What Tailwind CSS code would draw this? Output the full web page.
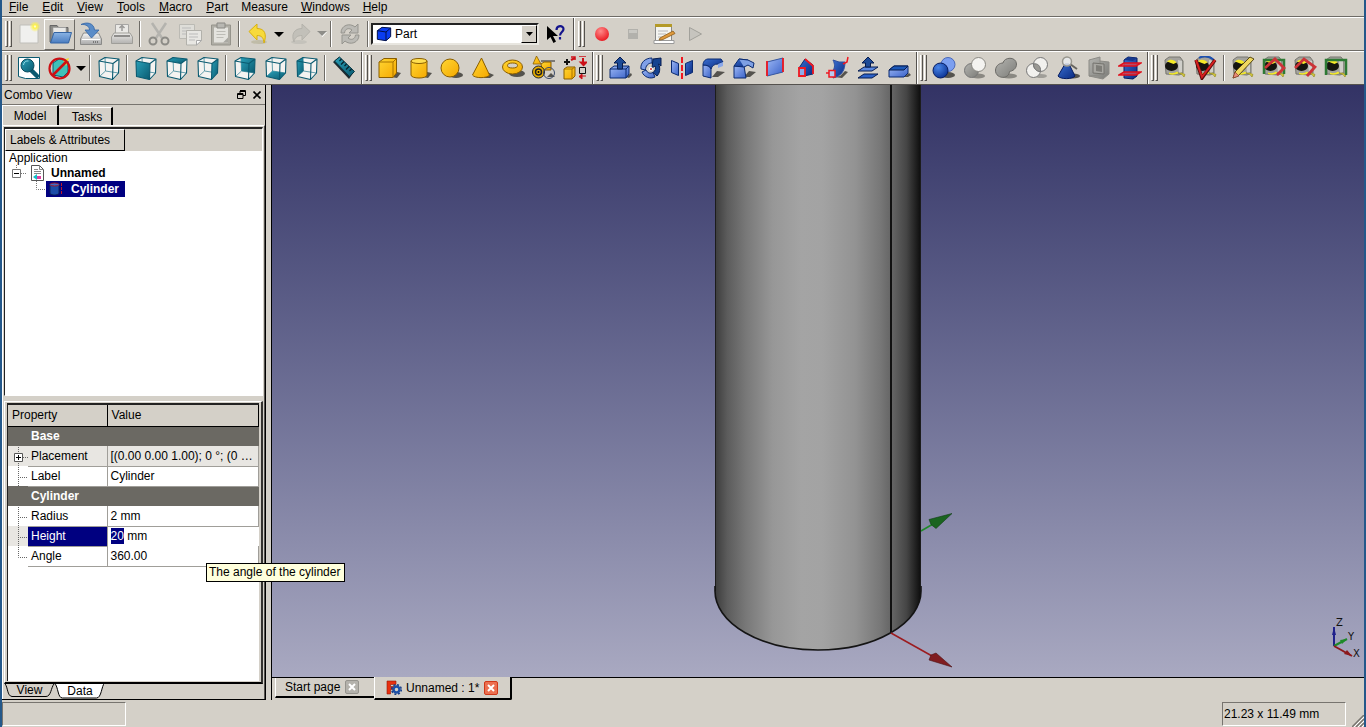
<!DOCTYPE html>
<html lang="en">
<head>
  <meta charset="UTF-8">
  <title>FreeCAD</title>
  <script src="https://cdn.jsdelivr.net/npm/@tailwindcss/browser@4"></script>
</head>
<body class="h-screen flex flex-col overflow-hidden bg-[#d4d0c8] border-x-2 border-[#24588a] font-['Liberation_Sans',Arial,sans-serif] text-xs leading-4 text-black">

  <!-- Icon definitions -->
  <svg class="absolute size-0" aria-hidden="true">
    <defs>
      <linearGradient id="yel" x1="0" y1="0" x2="1" y2="1"><stop offset="0" stop-color="#ffd633"/><stop offset="1" stop-color="#f5a800"/></linearGradient>
      <linearGradient id="blu" x1="0" y1="0" x2="1" y2="1"><stop offset="0" stop-color="#9db8f5"/><stop offset="1" stop-color="#3a62c8"/></linearGradient>
      <linearGradient id="dbl" x1="0" y1="0" x2="1" y2="1"><stop offset="0" stop-color="#3a6fd0"/><stop offset="1" stop-color="#0a2a80"/></linearGradient>
      <linearGradient id="tea" x1="0" y1="0" x2="1" y2="1"><stop offset="0" stop-color="#2aa0b8"/><stop offset="1" stop-color="#0a5a70"/></linearGradient>
      <linearGradient id="gry" x1="0" y1="0" x2="1" y2="1"><stop offset="0" stop-color="#b4b4b0"/><stop offset="1" stop-color="#7c7c78"/></linearGradient>
      <linearGradient id="met" x1="0" y1="0" x2="0" y2="1"><stop offset="0" stop-color="#f4f4f4"/><stop offset="1" stop-color="#a8a8a8"/></linearGradient>
      <linearGradient id="fold" x1="0" y1="0" x2="0" y2="1"><stop offset="0" stop-color="#8ab4e4"/><stop offset="1" stop-color="#4a7cc0"/></linearGradient>
      <radialGradient id="sun"><stop offset="0" stop-color="#fff"/><stop offset=".3" stop-color="#fff34a"/><stop offset="1" stop-color="#fff34a" stop-opacity="0"/></radialGradient>
      <radialGradient id="ball" cx=".35" cy=".3" r=".75"><stop offset="0" stop-color="#4a86e8"/><stop offset="1" stop-color="#0a3294"/></radialGradient>
      <radialGradient id="red" cx=".4" cy=".3" r=".7"><stop offset="0" stop-color="#ff8a8a"/><stop offset="1" stop-color="#ea1c24"/></radialGradient>
    </defs>

    <!-- File -->
    <symbol id="i-new" viewBox="0 0 24 24"><path d="M3 3h18v18H3z" fill="#f0f0ee" stroke="#c0bfba"/><circle cx="18" cy="4.500" r="5.500" fill="url(#sun)"/></symbol>
    <symbol id="i-open" viewBox="0 0 24 24"><path d="M2 3.500h7l1.500 2H20V20H2z" fill="#8a8a86" stroke="#666"/><path d="M5 5.500h13v8H5z" fill="#e8e8e6" stroke="#999" stroke-width=".6"/><path d="M6 10.500h17.500L20.500 21H2.500z" fill="url(#fold)" stroke="#3465a4"/></symbol>
    <symbol id="i-save" viewBox="0 0 24 24"><path d="M4.500 11h15l3 6v5.500h-21V17z" fill="url(#met)" stroke="#8a8a88"/><path d="M3 17.500h18" stroke="#fff"/><path d="M14 20h6" stroke="#777" stroke-dasharray="1 1" stroke-width="2"/><path d="M2 2.500C8-.5 15 1 15.500 8H20l-7.500 8L6 8h4.500C10.500 4.500 7 2 2 2.500z" fill="#5a8cc8" stroke="#3465a4" stroke-width=".8"/></symbol>
    <symbol id="i-print" viewBox="0 0 24 24" opacity=".75"><path d="M5.500 2.500h13V12h-13z" fill="#f2f2f0" stroke="#999"/><path d="M12 4v5M9.500 6L12 3.500 14.500 6" fill="none" stroke="#888" stroke-width="1.500"/><path d="M4 11h16l2.500 4v6.500h-21V15z" fill="url(#met)" stroke="#8e8e8a"/><path d="M4 14h16" stroke="#777" stroke-width="2"/></symbol>
    <symbol id="i-cut" viewBox="0 0 24 24"><path d="M5 1l10 15M19 1L9 16" stroke="#b4b3ae" stroke-width="2.500"/><g fill="none" stroke="#8c8b86" stroke-width="2"><circle cx="6" cy="19" r="3.500"/><circle cx="18" cy="19" r="3.500"/></g></symbol>
    <symbol id="i-copy" viewBox="0 0 24 24"><path d="M1.500 2.500h15v14h-15z" fill="#deddd8" stroke="#bbbab4"/><path d="M4 6h9M4 9h5M4 12h5" stroke="#bbb"/><path d="M8.500 8.500h15v10l-5 4.500h-10z" fill="#e8e7e3" stroke="#b2b1ab"/><path d="M11 12h9M11 15h9M11 18h6" stroke="#bbb"/><path d="M23.500 18.500h-5V23z" fill="#fff" stroke="#aaa"/></symbol>
    <symbol id="i-paste" viewBox="0 0 24 24"><path d="M2.500 3h19v20h-19z" fill="#b0aea6" stroke="#96948c"/><path d="M5 5.500h14v15H5z" fill="#e4e3de"/><path d="M8 1h8v5H8z" fill="#b8b7b2" stroke="#8a8984"/><path d="M7.500 9.500h9M7.500 12.500h9M7.500 15.500h7" stroke="#bdbcb6"/><path d="M19 15.500v5h-5z" fill="#a9a8a2"/></symbol>
    <symbol id="i-undo" viewBox="0 0 24 24"><ellipse cx="13" cy="20" rx="8" ry="2" fill="#c0bca8"/><path d="M3 9.500L11 2v4.500c8 0 10 6 7 14.500-.5-5-2-7.500-7-7.500V18z" fill="#f7da3c" stroke="#d8b010"/></symbol>
    <symbol id="i-redo" viewBox="0 0 24 24"><ellipse cx="10" cy="20" rx="8" ry="2" fill="#c4c2bb"/><path d="M21 9.500L13 2v4.500c-8 0-11 6-8 13.500.5-4 3-6.500 8-6.500V18z" fill="#c2c0b9" stroke="#b4b2ab"/></symbol>
    <symbol id="i-refresh" viewBox="0 0 24 24"><g fill="#bbbab5" stroke="#96958f"><path d="M3 11c0-8 9-10.500 14-6l3-3v9h-9l3-3c-3-2.500-7-1.500-7.500 3z"/><path d="M21 13c0 8-9 10.500-14 6l-3 3v-9h9l-3 3c3 2.500 7 1.500 7.500-3z"/></g></symbol>
    <symbol id="i-part" viewBox="0 0 24 24"><path d="M2 7l7-5 13 1v13l-7 6-13-2z" fill="#0a3cf0" stroke="#00104a" stroke-width="1.500"/><path d="M2 7l13 2 7-6M15 9v13" fill="none" stroke="#00104a" stroke-width="1.500"/></symbol>
    <symbol id="i-whats" viewBox="0 0 24 24"><path d="M4 4v14l3.500-3 3 6 2.500-1.500-3-5.500h5z" fill="#000"/><path d="M13.500 8c0-5 7-5 7-1 0 3-3.500 3-3.500 6.500M17 15v2.500" fill="none" stroke="#14148c" stroke-width="2.200"/></symbol>

    <!-- Macro -->
    <symbol id="i-rec" viewBox="0 0 24 24"><circle cx="12" cy="12" r="7" fill="url(#red)"/></symbol>
    <symbol id="i-stop" viewBox="0 0 24 24"><path d="M7 7h10v10H7z" fill="#b2b1ac"/><path d="M8 8h8v3H8z" fill="#c9c8c3"/></symbol>
    <symbol id="i-macro" viewBox="0 0 24 24"><path d="M3.500 3.500h16v15h-16z" fill="#f4f4f0" stroke="#888"/><path d="M3 2h17v3H3z" fill="#b49a28"/><path d="M2 18.500h20v3H2z" fill="#fff" stroke="#999"/><path d="M6 9h10M6 12h8M6 15h6" stroke="#b8b8b8"/><path d="M8 16l13-7 2 2.500-12 6-4 .5z" fill="#e09a3c" stroke="#8a5a18" stroke-width=".8"/></symbol>
    <symbol id="i-play" viewBox="0 0 24 24"><path d="M6.500 5.500l12 6.500-12 6.500z" fill="#c6c4be" stroke="#a2a19b"/></symbol>

    <!-- View -->
    <symbol id="i-fit" viewBox="0 0 24 24"><path d="M1.500 1.500h21v21h-14l-7-2z" fill="#fff" stroke="#0a5a70"/><path d="M14 14l6 6" stroke="#0a5a70" stroke-width="4.500" stroke-linecap="round"/><circle cx="10.500" cy="9.500" r="6.500" fill="url(#tea)" stroke="#0a4a5c"/><path d="M6.500 9c0-3 3-4.500 5-4" stroke="#8fd8e4" fill="none"/></symbol>
    <symbol id="i-style" viewBox="0 0 24 24"><path d="M5 7l6-4 9 2v11l-5 5-10-2z" fill="#3fc0b8" stroke="#0a5a70"/><path d="M15 4l6-2-3 8z" fill="#f4dc28"/><circle cx="11.500" cy="12.500" r="10" fill="none" stroke="#cc1014" stroke-width="2.200"/><path d="M18.500 5.500l-14 14" stroke="#cc1014" stroke-width="2.500"/></symbol>
    <symbol id="i-cube" viewBox="0 0 24 24"><path d="M2 5l6-3.500L22 3l-.5 14-6 6.500-13-3z" fill="#fff" fill-opacity=".75"/><path d="M8 1.500L8.500 15l13 2M8.500 15l-6 5.500" fill="none" stroke="#3d8798" stroke-width=".8"/></symbol>
    <symbol id="i-edges" viewBox="0 0 24 24"><path d="M2 5l6-3.500L22 3l-.5 14-6 6.500-13-3zM2 5l14 2.500L22 3M16 7.500l-.5 16" fill="none" stroke="#0a5a70" stroke-width="1.100" stroke-linejoin="round"/></symbol>
    <symbol id="i-ruler" viewBox="0 0 24 24"><path d="M1 6l6-5 15 15-5 7z" fill="#1d2a30"/><path d="M2.500 5l5-4 15 14.500-5 5z" fill="url(#tea)" stroke="#08323e"/><path d="M9.500 3l-2 2M12 5.500L9 8.500M14.500 8l-2 2M17 10.500l-3 3M19.500 13l-2 2" stroke="#05222a" stroke-width="1.200"/></symbol>

    <!-- Solids -->
    <symbol id="i-box" viewBox="0 0 24 24"><path d="M14 21l6-5 4 1-4 5z" fill="#55534e"/><path d="M2 6l5-3.500h12.500V17L16 21.500H2z" fill="url(#yel)" stroke="#8a5e00"/><path d="M2 6h14l3.500-3.500M16 6v15.500" fill="none" stroke="#a87400"/></symbol>
    <symbol id="i-cyl" viewBox="0 0 24 24"><path d="M15 21l4-5 5 1-4 5z" fill="#55534e"/><path d="M3 5v14c0 4 16 4 16 0V5z" fill="url(#yel)" stroke="#8a5e00"/><ellipse cx="11" cy="5" rx="8" ry="2.500" fill="#ffdf50" stroke="#8a5e00"/></symbol>
    <symbol id="i-sph" viewBox="0 0 24 24"><ellipse cx="17" cy="19" rx="7" ry="3" fill="#55534e"/><circle cx="11" cy="12" r="9" fill="url(#yel)" stroke="#8a5e00"/></symbol>
    <symbol id="i-cone" viewBox="0 0 24 24"><path d="M14 22l3-6 7 3-4 3z" fill="#55534e"/><path d="M11.500 2L2.500 19c2 3.500 15 3.500 17 0z" fill="url(#yel)" stroke="#8a5e00"/></symbol>
    <symbol id="i-torus" viewBox="0 0 24 24"><ellipse cx="16" cy="17.500" rx="8" ry="3.500" fill="#55534e"/><ellipse cx="11.500" cy="11" rx="10" ry="7" fill="url(#yel)" stroke="#8a5e00"/><ellipse cx="11.500" cy="9.500" rx="5" ry="2.500" fill="#d4d0c8" stroke="#8a5e00"/></symbol>
    <symbol id="i-prim" viewBox="0 0 24 24"><path d="M4.500 0L1 8h8z" fill="url(#yel)" stroke="#8a5e00" stroke-width=".8"/><path d="M9 5h14" stroke="#222"/><path d="M9 8l3-2h7v8h-9z" fill="url(#yel)" stroke="#8a5e00"/><path d="M19 17l4 4h-8z" fill="#55534e"/><circle cx="6.500" cy="16" r="6" fill="#e9ae00" stroke="#222"/><circle cx="6.500" cy="16" r="3" fill="none" stroke="#222" stroke-width="1.500"/><circle cx="6.500" cy="16" r="1"/><circle cx="17" cy="17" r="5.500" fill="none" stroke="#3a4a6a"/></symbol>
    <symbol id="i-shape" viewBox="0 0 24 24"><path d="M4 3v6M1 6h6" stroke="#111" stroke-width="2"/><path d="M8 4l4-2M20 2v5M18 6.500h5L20.500 9z" stroke="#cc1018" fill="#cc1018" stroke-width="2"/><path d="M8 1h4v3M16 0h7" stroke="#cc1018" stroke-width="1.500" fill="none"/><path d="M1 13l3-2h8v9l-3 3H1z" fill="url(#yel)" stroke="#8a5e00"/><path d="M1 13h8v10M9 13l3-2" fill="none" stroke="#a87400"/><path d="M16.500 11.500h6v6h-6z" fill="none" stroke="#111"/><path d="M23 20h-5M19 18l-3 2.500 3 2.500z" stroke="#cc1018" fill="#cc1018"/></symbol>

    <!-- Part tools -->
    <symbol id="i-extr" viewBox="0 0 24 24"><path d="M18 21l5-4 1 2-3 3z" fill="#55534e"/><path d="M2 13l4-3h15v8l-3 4H2z" fill="url(#blu)" stroke="#0a2a70"/><path d="M2 13h16l3-3M18 13v9" fill="none" stroke="#0a2a70"/><path d="M12 1l6 6h-3.500v6h-5V7H6z" fill="#1c4a96" stroke="#061c50"/></symbol>
    <symbol id="i-rev" viewBox="0 0 24 24"><path d="M13 2C6 2 1 7 2 13l4.500 1C6.500 10 9 7 13 7z" fill="#7fa0e8" stroke="#0a2a70"/><path d="M3 16c2 5 8 7.500 13 5l-2-4.500c-3 1.500-5.500.5-7-2.500z" fill="url(#blu)" stroke="#0a2a70"/><path d="M14 3l8-1v8l-2.500-2C21.500 12 21 17 18 20l-4-3.500c2.500-2 3-4 2-6.500l-3 2z" fill="#174390" stroke="#061c50"/><circle cx="12" cy="13" r="2" fill="#fff"/><circle cx="12" cy="13" r="1" fill="#d02020"/></symbol>
    <symbol id="i-mir" viewBox="0 0 24 24"><path d="M1.500 4.500l7 3v12l-7-3z" fill="url(#blu)" stroke="#0a2a70"/><path d="M22.500 4.500l-7 3v12l7-3z" fill="url(#dbl)" stroke="#0a2a70"/><path d="M12 1v22" stroke="#f01820" stroke-width="2" stroke-dasharray="6 2"/></symbol>
    <symbol id="i-fil" viewBox="0 0 24 24"><path d="M11 21l5-6 8 1-7 5z" fill="#55534e"/><path d="M2 9c2 0 5 0 8 3v10l-8-2z" fill="url(#blu)" stroke="#0a2a70"/><path d="M2 9c0-4 3-6 5-6h13l2 3-5 2c-4 0-6 2-7 5-1-3-4-4-8-4z" fill="url(#dbl)" stroke="#0a2a70"/><path d="M17 8l5-2v4l-5 2z" fill="#8aa8ea"/></symbol>
    <symbol id="i-cham" viewBox="0 0 24 24"><path d="M12 21l5-6 7 1-6 5z" fill="#55534e"/><path d="M2 10h10l2 12H2z" fill="url(#blu)" stroke="#0a2a70"/><path d="M2 10l5-7 9 1-4 7z" fill="url(#dbl)" stroke="#0a2a70"/><path d="M7 3l9 1 6 3-1 5-5-3-4 2" fill="#7ea0e4" stroke="#0a2a70"/></symbol>
    <symbol id="i-face" viewBox="0 0 24 24"><path d="M4 6l16-4v14L4 20z" fill="url(#blu)" stroke="#3556a0"/><path d="M4 5v15M20 2v14" stroke="#f01820" stroke-width="1.800"/></symbol>
    <symbol id="i-loft" viewBox="0 0 24 24"><path d="M5 12l6-9 8 6v9l-9 2z" fill="url(#dbl)" stroke="#0a2a70"/><path d="M11 3l8 7v8" fill="none" stroke="#f01820" stroke-width="1.800"/><path d="M5 12h6v8H5z" fill="#8fabea" stroke="#f01820" stroke-width="1.800"/></symbol>
    <symbol id="i-sweep" viewBox="0 0 24 24"><path d="M9 21l6-1 5-5 3 1-6 6z" fill="#55534e"/><path d="M8 4l6 2h6c0 8-3 14-12 16V14C10 12 10 8 8 4z" fill="url(#dbl)" stroke="#3050a0"/><path d="M1 17h7M23 1l-1 5-4 2" fill="none" stroke="#f01820" stroke-width="1.500"/><path d="M4 14.500h6V21H4z" fill="#b8c8f0" stroke="#f01820" stroke-width="1.500"/></symbol>
    <symbol id="i-off" viewBox="0 0 24 24"><path d="M8 18h14l-6 4H2z" fill="#2c62c8" stroke="#061c50"/><path d="M8 11h14l-6 4H2z" fill="#5a88e0" stroke="#061c50"/><path d="M12 1l6 6h-3.500v4h-5V7H6z" fill="#1c4a96" stroke="#061c50"/></symbol>
    <symbol id="i-thick" viewBox="0 0 24 24"><path d="M17 21l5-4 2 2-3 2z" fill="#55534e"/><path d="M2 14l5-4h14v7l-4 4H2z" fill="url(#blu)" stroke="#0a2a70"/><path d="M2 14l5-4h14l-4 4z" fill="#1c58b8" stroke="#061c50"/></symbol>

    <!-- Boolean -->
    <symbol id="i-bool" viewBox="0 0 24 24"><ellipse cx="16" cy="19" rx="7" ry="3" fill="#55534e"/><circle cx="16" cy="8.500" r="7" fill="#7c9ff0" stroke="#4a68b8"/><circle cx="8.500" cy="14.500" r="7.500" fill="url(#ball)" stroke="#061c60"/></symbol>
    <symbol id="i-bcut" viewBox="0 0 24 24"><ellipse cx="15" cy="20" rx="7" ry="2.500" fill="#8a8882"/><circle cx="8.500" cy="14.500" r="7" fill="url(#gry)" stroke="#777"/><circle cx="15.500" cy="8.500" r="7" fill="#f4f3f0" stroke="#8a8882"/></symbol>
    <symbol id="i-fuse" viewBox="0 0 24 24"><ellipse cx="15" cy="20" rx="8" ry="2.500" fill="#8a8882"/><path d="M9 7C10 1 22 0 22.500 8c0 5-4 7-7 7.500C15 24 1 23 1.500 14 2 9 6 7 9 7z" fill="url(#gry)" stroke="#6c6b67"/></symbol>
    <symbol id="i-comm" viewBox="0 0 24 24"><ellipse cx="16" cy="20" rx="6" ry="2" fill="#a09e98"/><circle cx="8.500" cy="14.500" r="7" fill="#f2f1ee" stroke="#777"/><circle cx="15.500" cy="8.500" r="7" fill="#f2f1ee" stroke="#777"/><path d="M8.500 8c4-1 7.500 2 7 7.500-4 0-7-3-7-7.500z" fill="#9a9994" stroke="#777"/></symbol>
    <symbol id="i-check" viewBox="0 0 24 24"><ellipse cx="17" cy="20" rx="7" ry="2.500" fill="#55534e"/><path d="M9 8h4l6 12c-2 3.500-15 3.500-17 0z" fill="url(#dbl)" stroke="#061c60"/><path d="M14 8l7 5" stroke="#66645e" stroke-width="2"/><circle cx="11" cy="5.500" r="4.500" fill="#e8ecf0" fill-opacity=".8" stroke="#99978f" stroke-width="1.500"/></symbol>
    <symbol id="i-sect" viewBox="0 0 24 24"><path d="M2 4l11-3v18l-11 1zM13 5l9 1v12l-6 5-14-3" fill="url(#gry)" stroke="#8c8b86"/><path d="M6 7l11 1v10l-11-1z" fill="#a8a7a2" stroke="#74736e"/><path d="M9 9l6 1v6l-6-1z" fill="#7e7d78"/></symbol>
    <symbol id="i-xsec" viewBox="0 0 24 24"><path d="M6 4l4-3 9 1v18l-4 3-9-1z" fill="url(#dbl)" stroke="#061c60"/><path d="M1 10l5-3h17l-5 3zM1 19l5-3h17l-5 3z" fill="#f04850" fill-opacity=".7" stroke="#e0101c" stroke-width="1.500"/><path d="M6 4l4-3 9 1-4 3z" fill="#16388c"/></symbol>

    <!-- Measure -->
    <symbol id="i-tape" viewBox="0 0 24 24"><path d="M2 4l4-3h11l3 4v12l-4 2-13-1z" fill="#a4a39e" stroke="#77766f"/><path d="M15 4l4 1v11l-3 2z" fill="#d0cfca"/><ellipse cx="8.500" cy="10" rx="6.500" ry="5" fill="#15150f"/><path d="M4 5.500c2-2.500 7-2.500 9.500 1l-3 1.500z" fill="#f4ea28"/><path d="M6 16.500c3 1.500 6 .5 8-1l1.500 1.500c-3 2-7 2-9.500 1z" fill="#f4ea28"/><path d="M15 17l4 0 3 1.500-1 2.500-2-2.500z" fill="#d8cc3a" stroke="#8a8018" stroke-width=".6"/></symbol>
  </svg>

  <!-- Menu bar -->
  <nav class="h-[17px] shrink-0 flex items-start border-b border-[#6e6b66] leading-[14px]">
    <button class="px-[7px]"><u>F</u>ile</button>
    <button class="px-[7px]"><u>E</u>dit</button>
    <button class="px-[7px]"><u>V</u>iew</button>
    <button class="px-[7px]"><u>T</u>ools</button>
    <button class="px-[7px]"><u>M</u>acro</button>
    <button class="px-[7px]"><u>P</u>art</button>
    <button class="px-[6px]">Measure</button>
    <button class="px-[7px]"><u>W</u>indows</button>
    <button class="px-[6px]"><u>H</u>elp</button>
  </nav>

  <!-- Toolbar row 1 -->
  <div class="h-[34px] shrink-0 flex border-t border-b border-t-white border-b-[#6e6b66]">
    <div class="flex items-center pr-[3px] border-r border-[#55524e]">
      <div class="w-[11px] h-[26px] flex gap-px pl-[3px]"><i class="w-[3px] border-l border-r border-l-white border-r-[#55524e] border-b border-b-[#55524e]"></i><i class="w-[3px] border-l border-r border-l-white border-r-[#55524e] border-b border-b-[#55524e]"></i></div>
      <button class="w-[31px] h-[31px] grid place-items-center" aria-label="New"><svg class="size-6"><use href="#i-new"/></svg></button>
      <button class="w-[31px] h-[31px] grid place-items-center border border-t-white border-l-white border-r-[#6e6b66] border-b-[#6e6b66]" aria-label="Open"><svg class="size-6"><use href="#i-open"/></svg></button>
      <button class="w-[31px] h-[31px] grid place-items-center" aria-label="Save"><svg class="size-6"><use href="#i-save"/></svg></button>
      <button class="w-[31px] h-[31px] grid place-items-center" aria-label="Print"><svg class="size-6"><use href="#i-print"/></svg></button>
      <span class="w-[2px] h-[26px] mx-[2px] border-l border-r border-l-[#6e6b66] border-r-white"></span>
      <button class="w-[31px] h-[31px] grid place-items-center" aria-label="Cut"><svg class="size-6"><use href="#i-cut"/></svg></button>
      <button class="w-[31px] h-[31px] grid place-items-center" aria-label="Copy"><svg class="size-6"><use href="#i-copy"/></svg></button>
      <button class="w-[31px] h-[31px] grid place-items-center" aria-label="Paste"><svg class="size-6"><use href="#i-paste"/></svg></button>
      <span class="w-[2px] h-[26px] mx-[2px] border-l border-r border-l-[#6e6b66] border-r-white"></span>
      <button class="w-[31px] h-[31px] grid place-items-center" aria-label="Undo"><svg class="size-6"><use href="#i-undo"/></svg></button>
      <button class="w-3 h-[31px] grid place-items-center" aria-label="Undo list"><svg class="w-[10px] h-[5px]" viewBox="0 0 10 5"><path d="M0 0h10L5 5z"/></svg></button>
      <button class="w-[31px] h-[31px] grid place-items-center" aria-label="Redo"><svg class="size-6"><use href="#i-redo"/></svg></button>
      <button class="w-3 h-[31px] grid place-items-center" aria-label="Redo list"><svg class="w-[10px] h-[6px]" viewBox="0 0 10 6"><path d="M1 1h9L5.500 6z" fill="#fff"/><path d="M0 0h10L5 5z" fill="#8e8d88"/></svg></button>
      <span class="w-[2px] h-[26px] mx-[2px] border-l border-r border-l-[#6e6b66] border-r-white"></span>
      <button class="w-[31px] h-[31px] grid place-items-center" aria-label="Refresh"><svg class="size-6"><use href="#i-refresh"/></svg></button>
      <span class="w-[2px] h-[26px] mx-[2px] border-l border-r border-l-[#6e6b66] border-r-white"></span>
      <div class="relative w-[168px] h-[22px] border-2 border-t-[#222] border-l-[#222] border-r-[#e8e6e0] border-b-[#e8e6e0] bg-white">
        <select aria-label="Workbench" class="w-full h-full pl-[22px] appearance-none bg-white leading-4 outline-none"><option>Part</option></select>
        <svg class="absolute left-[3px] top-px size-4 pointer-events-none"><use href="#i-part"/></svg>
        <span class="absolute right-0 top-0 w-4 h-[18px] grid place-items-center bg-[#d4d0c8] border border-t-white border-l-white border-r-black border-b-black pointer-events-none"><svg class="w-[7px] h-1" viewBox="0 0 7 4"><path d="M0 0h7L3.500 4z"/></svg></span>
      </div>
      <button class="w-[31px] h-[31px] grid place-items-center" aria-label="What's this"><svg class="size-6"><use href="#i-whats"/></svg></button>
    </div>
    <div class="flex items-center pl-px border-l border-white">
      <div class="w-[10px] h-[26px] flex gap-px pl-[2px]"><i class="w-[3px] border-l border-r border-l-white border-r-[#55524e] border-b border-b-[#55524e]"></i><i class="w-[3px] border-l border-r border-l-white border-r-[#55524e] border-b border-b-[#55524e]"></i></div>
      <button class="w-[31px] h-[31px] grid place-items-center" aria-label="Record macro"><svg class="size-6"><use href="#i-rec"/></svg></button>
      <button class="w-[31px] h-[31px] grid place-items-center" aria-label="Stop macro"><svg class="size-6"><use href="#i-stop"/></svg></button>
      <button class="w-[31px] h-[31px] grid place-items-center" aria-label="Macros"><svg class="size-6"><use href="#i-macro"/></svg></button>
      <button class="w-[31px] h-[31px] grid place-items-center" aria-label="Run macro"><svg class="size-6"><use href="#i-play"/></svg></button>
    </div>
  </div>

  <!-- Toolbar row 2 -->
  <div class="h-[34px] shrink-0 flex border-t border-b border-t-white border-b-[#55524e]">
    <div class="flex items-center pr-[2px] border-r border-[#55524e]">
      <div class="w-[11px] h-[26px] flex gap-px pl-[3px]"><i class="w-[3px] border-l border-r border-l-white border-r-[#55524e] border-b border-b-[#55524e]"></i><i class="w-[3px] border-l border-r border-l-white border-r-[#55524e] border-b border-b-[#55524e]"></i></div>
      <button class="w-[31px] h-[31px] grid place-items-center" aria-label="Fit all"><svg class="size-6"><use href="#i-fit"/></svg></button>
      <button class="w-[31px] h-[31px] grid place-items-center" aria-label="Draw style"><svg class="size-6"><use href="#i-style"/></svg></button>
      <button class="w-3 h-[31px] grid place-items-center" aria-label="Draw style list"><svg class="w-[10px] h-[5px]" viewBox="0 0 10 5"><path d="M0 0h10L5 5z"/></svg></button>
      <span class="w-[2px] h-[26px] mx-[2px] border-l border-r border-l-[#6e6b66] border-r-white"></span>
      <button class="w-[31px] h-[31px] grid place-items-center" aria-label="Axonometric"><svg class="size-6" viewBox="0 0 24 24"><use href="#i-cube"/><use href="#i-edges"/></svg></button>
      <span class="w-[2px] h-[26px] mx-[2px] border-l border-r border-l-[#6e6b66] border-r-white"></span>
      <button class="w-[31px] h-[31px] grid place-items-center" aria-label="Front"><svg class="size-6" viewBox="0 0 24 24"><use href="#i-cube"/><path d="M2 5l14 2.500-.5 16-13-3z" fill="url(#tea)"/><use href="#i-edges"/></svg></button>
      <button class="w-[31px] h-[31px] grid place-items-center" aria-label="Top"><svg class="size-6" viewBox="0 0 24 24"><use href="#i-cube"/><path d="M2 5l6-3.500L22 3l-6 4.500z" fill="url(#tea)"/><use href="#i-edges"/></svg></button>
      <button class="w-[31px] h-[31px] grid place-items-center" aria-label="Right"><svg class="size-6" viewBox="0 0 24 24"><use href="#i-cube"/><path d="M16 7.500L22 3l-.5 14-6 6.500z" fill="url(#tea)"/><use href="#i-edges"/></svg></button>
      <span class="w-[2px] h-[26px] mx-[2px] border-l border-r border-l-[#6e6b66] border-r-white"></span>
      <button class="w-[31px] h-[31px] grid place-items-center" aria-label="Rear"><svg class="size-6" viewBox="0 0 24 24"><use href="#i-cube"/><path d="M8 1.500L22 3l-.5 14-13-2z" fill="url(#tea)"/><use href="#i-edges"/></svg></button>
      <button class="w-[31px] h-[31px] grid place-items-center" aria-label="Bottom"><svg class="size-6" viewBox="0 0 24 24"><use href="#i-cube"/><path d="M8.500 15l13 2-6 6.500-13-3z" fill="url(#tea)"/><use href="#i-edges"/></svg></button>
      <button class="w-[31px] h-[31px] grid place-items-center" aria-label="Left"><svg class="size-6" viewBox="0 0 24 24"><use href="#i-cube"/><path d="M2 5l6-3.500.5 13.500-6 5.500z" fill="url(#tea)"/><use href="#i-edges"/></svg></button>
      <span class="w-[2px] h-[26px] mx-[2px] border-l border-r border-l-[#6e6b66] border-r-white"></span>
      <button class="w-[31px] h-[31px] grid place-items-center" aria-label="Measure distance"><svg class="size-6"><use href="#i-ruler"/></svg></button>
    </div>
    <div class="flex items-center pr-[2px] border-l border-r border-l-white border-r-[#55524e]">
      <div class="w-[10px] h-[26px] flex gap-px pl-[2px]"><i class="w-[3px] border-l border-r border-l-white border-r-[#55524e] border-b border-b-[#55524e]"></i><i class="w-[3px] border-l border-r border-l-white border-r-[#55524e] border-b border-b-[#55524e]"></i></div>
      <button class="w-[31px] h-[31px] grid place-items-center" aria-label="Box"><svg class="size-6"><use href="#i-box"/></svg></button>
      <button class="w-[31px] h-[31px] grid place-items-center" aria-label="Cylinder"><svg class="size-6"><use href="#i-cyl"/></svg></button>
      <button class="w-[31px] h-[31px] grid place-items-center" aria-label="Sphere"><svg class="size-6"><use href="#i-sph"/></svg></button>
      <button class="w-[31px] h-[31px] grid place-items-center" aria-label="Cone"><svg class="size-6"><use href="#i-cone"/></svg></button>
      <button class="w-[31px] h-[31px] grid place-items-center" aria-label="Torus"><svg class="size-6"><use href="#i-torus"/></svg></button>
      <button class="w-[31px] h-[31px] grid place-items-center" aria-label="Primitives"><svg class="size-6"><use href="#i-prim"/></svg></button>
      <button class="w-[31px] h-[31px] grid place-items-center" aria-label="Shape builder"><svg class="size-6"><use href="#i-shape"/></svg></button>
    </div>
    <div class="flex items-center pr-[2px] border-l border-r border-l-white border-r-[#55524e]">
      <div class="w-[10px] h-[26px] flex gap-px pl-[2px]"><i class="w-[3px] border-l border-r border-l-white border-r-[#55524e] border-b border-b-[#55524e]"></i><i class="w-[3px] border-l border-r border-l-white border-r-[#55524e] border-b border-b-[#55524e]"></i></div>
      <button class="w-[31px] h-[31px] grid place-items-center" aria-label="Extrude"><svg class="size-6"><use href="#i-extr"/></svg></button>
      <button class="w-[31px] h-[31px] grid place-items-center" aria-label="Revolve"><svg class="size-6"><use href="#i-rev"/></svg></button>
      <button class="w-[31px] h-[31px] grid place-items-center" aria-label="Mirror"><svg class="size-6"><use href="#i-mir"/></svg></button>
      <button class="w-[31px] h-[31px] grid place-items-center" aria-label="Fillet"><svg class="size-6"><use href="#i-fil"/></svg></button>
      <button class="w-[31px] h-[31px] grid place-items-center" aria-label="Chamfer"><svg class="size-6"><use href="#i-cham"/></svg></button>
      <button class="w-[31px] h-[31px] grid place-items-center" aria-label="Ruled surface"><svg class="size-6"><use href="#i-face"/></svg></button>
      <button class="w-[31px] h-[31px] grid place-items-center" aria-label="Loft"><svg class="size-6"><use href="#i-loft"/></svg></button>
      <button class="w-[31px] h-[31px] grid place-items-center" aria-label="Sweep"><svg class="size-6"><use href="#i-sweep"/></svg></button>
      <button class="w-[31px] h-[31px] grid place-items-center" aria-label="Offset"><svg class="size-6"><use href="#i-off"/></svg></button>
      <button class="w-[31px] h-[31px] grid place-items-center" aria-label="Thickness"><svg class="size-6"><use href="#i-thick"/></svg></button>
    </div>
    <div class="flex items-center pr-[2px] border-l border-r border-l-white border-r-[#55524e]">
      <div class="w-[10px] h-[26px] flex gap-px pl-[2px]"><i class="w-[3px] border-l border-r border-l-white border-r-[#55524e] border-b border-b-[#55524e]"></i><i class="w-[3px] border-l border-r border-l-white border-r-[#55524e] border-b border-b-[#55524e]"></i></div>
      <button class="w-[31px] h-[31px] grid place-items-center" aria-label="Boolean"><svg class="size-6"><use href="#i-bool"/></svg></button>
      <button class="w-[31px] h-[31px] grid place-items-center" aria-label="Boolean cut"><svg class="size-6"><use href="#i-bcut"/></svg></button>
      <button class="w-[31px] h-[31px] grid place-items-center" aria-label="Union"><svg class="size-6"><use href="#i-fuse"/></svg></button>
      <button class="w-[31px] h-[31px] grid place-items-center" aria-label="Intersection"><svg class="size-6"><use href="#i-comm"/></svg></button>
      <button class="w-[31px] h-[31px] grid place-items-center" aria-label="Check geometry"><svg class="size-6"><use href="#i-check"/></svg></button>
      <button class="w-[31px] h-[31px] grid place-items-center" aria-label="Section"><svg class="size-6"><use href="#i-sect"/></svg></button>
      <button class="w-[31px] h-[31px] grid place-items-center" aria-label="Cross sections"><svg class="size-6"><use href="#i-xsec"/></svg></button>
    </div>
    <div class="flex items-center border-l border-white">
      <div class="w-[10px] h-[26px] flex gap-px pl-[2px]"><i class="w-[3px] border-l border-r border-l-white border-r-[#55524e] border-b border-b-[#55524e]"></i><i class="w-[3px] border-l border-r border-l-white border-r-[#55524e] border-b border-b-[#55524e]"></i></div>
      <button class="w-[31px] h-[31px] grid place-items-center" aria-label="Measure linear"><svg class="size-6"><use href="#i-tape"/></svg></button>
      <button class="w-[31px] h-[31px] grid place-items-center" aria-label="Measure angular"><svg class="size-6" viewBox="0 0 24 24"><use href="#i-tape"/><path d="M5 2c5-3 10-2 15 2" fill="none" stroke="#1c50b0" stroke-width="2"/><path d="M2 4l6 18L21 4" fill="none" stroke="#5c0e0e" stroke-width="3.500"/><path d="M2 4l6 17L21 4" fill="none" stroke="#d82020" stroke-width="2"/></svg></button>
      <span class="w-[2px] h-[26px] mx-[2px] border-l border-r border-l-[#6e6b66] border-r-white"></span>
      <button class="w-[31px] h-[31px] grid place-items-center" aria-label="Clear all"><svg class="size-6" viewBox="0 0 24 24"><use href="#i-tape"/><path d="M2 22l2-6L19 1l4 2L7 20z" fill="#f0d860" stroke="#5a4a10"/><path d="M2 22l2-6 4 4z" fill="#e88a78" stroke="#7a3020" stroke-width=".6"/></svg></button>
      <button class="w-[31px] h-[31px] grid place-items-center" aria-label="Toggle all"><svg class="size-6" viewBox="0 0 24 24"><use href="#i-tape"/><path d="M2 18V4h20v14" fill="none" stroke="#2e7a34" stroke-width="2.500"/><path d="M3 12L13 3l9 9-7 7" fill="none" stroke="#cc3438" stroke-width="2.800"/></svg></button>
      <button class="w-[31px] h-[31px] grid place-items-center" aria-label="Toggle 3d"><svg class="size-6" viewBox="0 0 24 24"><use href="#i-tape"/><path d="M2 12L11 3l11 8-8 9" fill="none" stroke="#cc3438" stroke-width="2.800"/></svg></button>
      <button class="w-[31px] h-[31px] grid place-items-center" aria-label="Toggle delta"><svg class="size-6" viewBox="0 0 24 24"><use href="#i-tape"/><path d="M2 19V4h20v15" fill="none" stroke="#2e7a34" stroke-width="2.500"/></svg></button>
    </div>
  </div>

  <main class="flex-1 min-h-0 flex">
    <!-- Combo view dock -->
    <aside class="relative w-[264px] shrink-0 flex flex-col border-r border-b border-black">
      <div class="h-5 flex items-center pl-[2px] pr-px border-b border-[#77746f]">
        <span class="flex-1">Combo View</span>
        <button aria-label="Float" class="w-[15px] grid place-items-center"><svg class="size-[9px]" viewBox="0 0 9 9"><path d="M3 .5h5.500v5H6M3 1.500h5.500M3 1v2M.5 3.500H6v5H.500zM.5 4.500H6" fill="none" stroke="#000"/></svg></button>
        <button aria-label="Close" class="w-[15px] grid place-items-center"><svg class="size-2" viewBox="0 0 8 8"><path d="M.5.5l7 7M7.500.5l-7 7" stroke="#000" stroke-width="1.600"/></svg></button>
      </div>
      <div class="h-5 flex items-end">
        <button class="w-[57px] h-5 border-t border-l border-r-2 border-t-white border-l-white border-r-black">Model</button>
        <button class="w-[54px] h-[18px] pl-1 border-t border-r-2 border-t-white border-r-black">Tasks</button>
      </div>
      <div class="flex-1 min-h-0 flex flex-col border-t border-l border-r border-t-white border-l-white border-r-[#55524e] pl-px pr-px">
        <!-- Tree -->
        <div class="h-[269px] shrink-0 flex flex-col mt-px border-t-2 border-l border-b border-r border-t-[#222] border-l-[#222] border-b-white border-r-white">
          <div class="h-[22px] shrink-0"><div class="w-[120px] h-[22px] pl-1 flex items-center border border-t-white border-l-white border-r-black border-b-black">Labels &amp; Attributes</div></div>
          <ul class="flex-1 bg-white">
            <li class="h-[14px] pl-1 flex items-center">Application</li>
            <li class="h-4 pl-[7px] flex items-center font-bold">
              <svg class="w-[15px] h-4" viewBox="0 0 15 16"><path d="M4.500 0v4M9 8.500h6" stroke="#777" stroke-dasharray="1 1"/><path d="M.5 4.500h8v8h-8z" fill="#fff" stroke="#777"/><path d="M2 8.500h5" stroke="#000"/></svg>
              <svg class="w-[14px] h-4 ml-1 mr-[6px]" viewBox="0 0 14 16"><path d="M.5.500h8l4 4v11H.5z" fill="#fff" stroke="#555"/><path d="M8.500.5v4h4M3 4.500h4M3 6.500h7M3 8.500h7" fill="none" stroke="#888"/><path d="M2 12l4-3v6z" fill="#10c0c8"/><path d="M6 11h4v3H6z" fill="#e040a0"/></svg>
              Unnamed</li>
            <li class="h-4 flex items-center pl-[31px] font-bold">
              <svg class="w-[10px] h-4" viewBox="0 0 10 16"><path d="M.5 0v8.500H10" fill="none" stroke="#777" stroke-dasharray="1 1"/></svg>
              <span class="h-4 flex items-center bg-[#000080] text-white pl-[3px] pr-[6px] gap-2">
                <svg class="w-[14px] h-[14px]" viewBox="0 0 14 14"><path d="M1 2.500v9c2 2 7 2 9 0v-9z" fill="#1c4ca8" stroke="#0a2258"/><ellipse cx="5.500" cy="2.500" rx="4.500" ry="1.500" fill="#3c6cc8" stroke="#a01828"/><path d="M12.500 1v12" stroke="#c01828" stroke-dasharray="3 1"/></svg>
                Cylinder</span></li>
          </ul>
        </div>
        <!-- Property editor -->
        <div class="flex-1 min-h-0 flex flex-col mt-[5px] border-t border-l border-r-2 border-b-2 border-t-white border-l-white border-r-[#33312e] border-b-black">
          <div class="flex-1 mt-px ml-[2px] mr-[2px] mb-px border-t-2 border-l border-[#222] bg-white">
            <table class="w-[251px] table-fixed border-collapse">
              <colgroup><col class="w-5"><col class="w-[79px]"><col></colgroup>
              <thead>
                <tr class="h-[21px] bg-[#d4d0c8] text-left">
                  <th colspan="2" class="p-0 pl-1 font-normal border-r border-b border-black">Property</th>
                  <th class="p-0 pl-1 font-normal border-r border-b border-black">Value</th>
                </tr>
              </thead>
              <tbody>
                <tr class="h-5 bg-[#6b6963] text-white"><td class="p-0"></td><td colspan="2" class="p-0 pl-[3px] font-bold">Base</td></tr>
                <tr class="h-5 bg-[#e8e6e2]">
                  <td class="p-0"><svg class="block w-5 h-[19px]" viewBox="0 0 20 19"><path d="M10.500 0v19M15 10.500h5" stroke="#666" stroke-dasharray="1 1"/><path d="M6.500 6.500h8v8h-8z" fill="#fff" stroke="#555"/><path d="M8 10.500h5M10.500 8v5" stroke="#000"/></svg></td>
                  <td class="p-0 pl-[3px] border-r border-b border-[#a09e99]">Placement</td><td class="p-0 pl-[3px] border-r border-b border-[#a09e99] whitespace-nowrap">[(0.00 0.00 1.00); 0 °; (0 …</td>
                </tr>
                <tr class="h-5">
                  <td class="p-0"><svg class="block w-5 h-[19px]" viewBox="0 0 20 19"><path d="M10.500 0v19M10 10.500h10" stroke="#666" stroke-dasharray="1 1"/></svg></td>
                  <td class="p-0 pl-[3px] border-r border-b border-[#a09e99]">Label</td><td class="p-0 pl-[3px] border-r border-b border-[#a09e99]">Cylinder</td>
                </tr>
                <tr class="h-5 bg-[#6b6963] text-white"><td class="p-0"></td><td colspan="2" class="p-0 pl-[3px] font-bold">Cylinder</td></tr>
                <tr class="h-5">
                  <td class="p-0"><svg class="block w-5 h-[19px]" viewBox="0 0 20 19"><path d="M10.500 0v19M10 10.500h10" stroke="#666" stroke-dasharray="1 1"/></svg></td>
                  <td class="p-0 pl-[3px] border-r border-b border-[#a09e99]">Radius</td><td class="p-0 pl-[3px] border-r border-b border-[#a09e99]">2 mm</td>
                </tr>
                <tr class="h-5">
                  <td class="p-0 bg-[#e8e6e2]"><svg class="block w-5 h-[19px]" viewBox="0 0 20 19"><path d="M10.500 0v19M10 10.500h10" stroke="#666" stroke-dasharray="1 1"/></svg></td>
                  <td class="p-0 pl-[3px] bg-[#000080] text-white border-r border-b border-[#a09e99]"><label for="height">Height</label></td>
                  <td class="p-0 pl-[3px]"><input id="height" type="text" value="20 mm" class="block w-full h-4 outline-none selection:bg-[#000080] selection:text-white"></td>
                </tr>
                <tr class="h-5">
                  <td class="p-0"><svg class="block w-5 h-[19px]" viewBox="0 0 20 19"><path d="M10.500 0v10.500H20" fill="none" stroke="#666" stroke-dasharray="1 1"/></svg></td>
                  <td class="p-0 pl-[3px] border-r border-b border-[#a09e99]">Angle</td><td class="p-0 pl-[3px] border-r border-b border-[#a09e99]">360.00</td>
                </tr>
              </tbody>
            </table>
          </div>
        </div>
        <div class="relative h-[15px] shrink-0 flex pl-px leading-[13px]">
          <svg class="absolute left-px top-0 w-[102px] h-[15px]" viewBox="0 0 102 15"><path d="M0 0c3 3 2 12 7 12.500h34c5 0 5-9 8-12.500" fill="#d4d0c8" stroke="#000"/><path d="M49.500-1c4 4 3 15 8 15h34c5 0 5-12 8-15" fill="#fff" stroke="#000"/></svg>
          <button class="relative w-[49px] h-[13px]">View</button>
          <button class="relative w-[52px] h-[15px] leading-[13px]">Data</button>
        </div>
      </div>
      <!-- Tooltip -->
      <div role="tooltip" class="absolute z-10 left-[204px] top-[478px] w-[139px] h-[19px] px-[2px] border border-black bg-[#ffffdc] whitespace-nowrap">The angle of the cylinder</div>
    </aside>

    <!-- 3D view -->
    <section class="flex-1 min-w-0 ml-[5px] flex flex-col border-l border-black">
      <div class="relative flex-1 min-h-0 overflow-hidden border-b border-black bg-linear-to-b from-[#333365] to-[#a9a9c1]">
        <svg class="block w-full h-full" viewBox="0 0 1092 592" preserveAspectRatio="xMidYMax slice">
          <defs>
            <linearGradient id="body">
              <stop offset="0" stop-color="#3c3c3c"/><stop offset=".06" stop-color="#5c5c5c"/><stop offset=".15" stop-color="#787878"/><stop offset=".28" stop-color="#979797"/>
              <stop offset=".42" stop-color="#a4a4a4"/><stop offset=".52" stop-color="#a3a3a3"/><stop offset=".68" stop-color="#939393"/><stop offset=".8" stop-color="#787878"/>
              <stop offset=".87" stop-color="#606060"/><stop offset=".93" stop-color="#454545"/><stop offset="1" stop-color="#0c0c0c"/>
            </linearGradient>
          </defs>
          <path d="M649 446l12-7" stroke="#1e8a28" stroke-width="1.500"/>
          <path d="M680 428.500l-23 6 2 5 5 4z" fill="#1a6420" stroke="#0f3c14" stroke-width=".6"/>
          <path d="M443-1v507a103 59 0 0 0 206 0V-1z" fill="url(#body)"/>
          <path d="M443.500-1v507M648.500-1v507" stroke="#1c1c1c" stroke-width="1"/>
          <path d="M619 0v548" stroke="#111" stroke-width="2"/>
          <path d="M443 501v5a103 59 0 0 0 206 0v-5" fill="none" stroke="#141414" stroke-width="1.600"/>
          <path d="M619 548l41 23" stroke="#9c1c20" stroke-width="1.500"/>
          <path d="M680 582l-16-14-5 2-2 5z" fill="#801c20" stroke="#4c1012" stroke-width=".6"/>
        </svg>
        <svg class="absolute right-0 bottom-[18px] w-[36px] h-[44px] font-['DejaVu_Sans',sans-serif]" viewBox="0 0 36 44">
          <g fill="none" stroke-width="2"><path d="M6 31V12" stroke="#20208c"/><path d="M6 31l13-7" stroke="#1e8a28"/><path d="M6 31l18 10" stroke="#8c181c"/></g>
          <path d="M6 12l-2 8h4z" fill="#20208c"/><path d="M19 24l-7 1 2 4z" fill="#1e8a28"/><path d="M24 41l-5-6-3 4z" fill="#8c181c"/>
          <g font-size="10" fill="#111"><text x="8" y="11">Z</text><text x="20" y="25">Y</text><text x="25" y="42">X</text></g>
        </svg>
      </div>
      <!-- Document tabs -->
      <div class="h-[22px] shrink-0 flex items-start pl-[3px]">
        <div class="w-[99px] h-5 flex items-center pl-[9px] border-l border-b-2 border-l-white border-b-black">
          <button class="mr-[5px]">Start page</button>
          <button aria-label="Close Start page" class="size-[14px] rounded-xs bg-[#b4b2ac] border border-[#96948e] grid place-items-center"><svg class="size-2" viewBox="0 0 8 8"><path d="M1 1l6 6M7 1L1 7" stroke="#fff" stroke-width="2"/></svg></button>
        </div>
        <div class="relative w-[138px] h-[23px] -mt-px flex items-center pl-[11px] bg-[#d4d0c8] border-l border-r-2 border-b-2 border-l-white border-r-black border-b-black rounded-br-xs">
          <svg class="size-4 mr-1" viewBox="0 0 16 16"><path d="M1 1h9v3.500H4.500v2H9v3H4.500V14H1z" fill="#e83010" stroke="#901808" stroke-width=".6"/><circle cx="10.500" cy="9.500" r="3" fill="#d4d0c8" stroke="#1c50a8" stroke-width="2.500"/><circle cx="10.500" cy="9.500" r="4.800" fill="none" stroke="#143c88" stroke-width="1.500" stroke-dasharray="2 1.770"/></svg>
          <button class="mr-[5px]">Unnamed : 1*</button>
          <button aria-label="Close Unnamed" class="size-[14px] rounded-xs bg-[#ec7050] border border-[#d03818] grid place-items-center"><svg class="size-2" viewBox="0 0 8 8"><path d="M1 1l6 6M7 1L1 7" stroke="#fff" stroke-width="2"/></svg></button>
        </div>
      </div>
    </section>
  </main>

  <!-- Status bar -->
  <footer class="relative h-[27px] shrink-0 flex justify-between pt-[2px] pr-[18px]">
    <div class="w-[124px] h-6 border border-t-[#77746f] border-l-[#77746f] border-r-white border-b-white"></div>
    <div class="w-[124px] h-6 pl-px flex items-center border border-t-[#77746f] border-l-[#77746f] border-r-white border-b-white">21.23 x 11.49 mm</div>
    <svg class="absolute right-0 bottom-0 size-3" viewBox="0 0 12 12"><path d="M0 12L12 0M4 12l8-8M8 12l4-4" stroke="#77746f" stroke-width="1.500"/><path d="M2 12L12 2M6 12l6-6M10 12l2-2" stroke="#fff"/></svg>
  </footer>

  <script>
    // the height editor opens with its number selected
    const height = document.getElementById('height');
    height.focus();
    height.setSelectionRange(0, 2);
  </script>
</body>
</html>
